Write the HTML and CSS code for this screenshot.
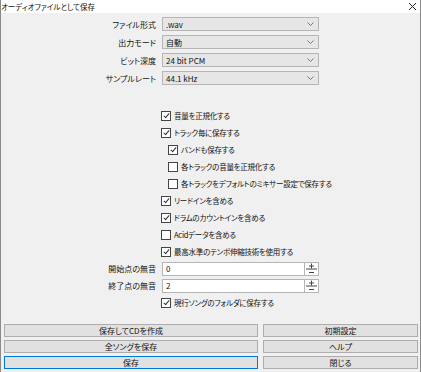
FILE: index.html
```html
<!DOCTYPE html>
<html lang="ja">
<head>
    <meta charset="UTF-8">
    <title>オーディオファイルとして保存</title>
    <link rel="stylesheet" href="styles.css">
</head>
<body>
    <div class="window">
        <div class="titlebar">
            <span class="title">オーディオファイルとして保存</span>
            <svg class="close" width="9" height="9" viewBox="0 0 9 9"><path d="M1 1L8 8M8 1L1 8" stroke="#222" stroke-width="1"/></svg>
        </div>

        <div class="fields">
            <label>ファイル形式</label>
            <div class="combo"><span>.wav</span><svg width="7" height="4" viewBox="0 0 7 4"><path d="M0.5 0.5L3.5 3.5L6.5 0.5" fill="none" stroke="#777"/></svg></div>
            <label>出力モード</label>
            <div class="combo"><span>自動</span><svg width="7" height="4" viewBox="0 0 7 4"><path d="M0.5 0.5L3.5 3.5L6.5 0.5" fill="none" stroke="#777"/></svg></div>
            <label>ビット深度</label>
            <div class="combo"><span>24 bit PCM</span><svg width="7" height="4" viewBox="0 0 7 4"><path d="M0.5 0.5L3.5 3.5L6.5 0.5" fill="none" stroke="#777"/></svg></div>
            <label>サンプルレート</label>
            <div class="combo"><span>44.1 kHz</span><svg width="7" height="4" viewBox="0 0 7 4"><path d="M0.5 0.5L3.5 3.5L6.5 0.5" fill="none" stroke="#777"/></svg></div>
        </div>

        <div class="options">
            <span></span><div class="check"><i class="box on"></i>音量を正規化する</div>
            <span></span><div class="check"><i class="box on"></i>トラック毎に保存する</div>
            <span></span><div class="check sub"><i class="box on"></i>バンドも保存する</div>
            <span></span><div class="check sub"><i class="box"></i>各トラックの音量を正規化する</div>
            <span></span><div class="check sub"><i class="box"></i>各トラックをデフォルトのミキサー設定で保存する</div>
            <span></span><div class="check"><i class="box on"></i>リードインを含める</div>
            <span></span><div class="check"><i class="box on"></i>ドラムのカウントインを含める</div>
            <span></span><div class="check"><i class="box"></i>Acidデータを含める</div>
            <span></span><div class="check"><i class="box on"></i>最高水準のテンポ伸縮技術を使用する</div>
            <label>開始点の無音</label>
            <div class="spin"><span class="value">0</span><svg width="13" height="12" viewBox="0 0 13 12"><path d="M4 3H9M6.5 0.5V5.5M1 6H12M4 9.5H9" stroke="#444" stroke-width="1" fill="none"/></svg></div>
            <label>終了点の無音</label>
            <div class="spin"><span class="value">2</span><svg width="13" height="12" viewBox="0 0 13 12"><path d="M4 3H9M6.5 0.5V5.5M1 6H12M4 9.5H9" stroke="#444" stroke-width="1" fill="none"/></svg></div>
            <span></span><div class="check"><i class="box on"></i>現行ソングのフォルダに保存する</div>
        </div>

        <div class="buttons">
            <button>保存してCDを作成</button>
            <button>初期設定</button>
            <button>全ソングを保存</button>
            <button>ヘルプ</button>
            <button class="default">保存</button>
            <button>閉じる</button>
        </div>
    </div>
</body>
</html>
```

FILE: styles.css
```css
body {
    margin: 0;
    font-family: "Noto Sans CJK JP", "Liberation Sans", sans-serif;
    font-size: 8px;
    font-feature-settings: "palt";
    color: #111;
    background: #fff;
}

.window {
    width: 419px;
    height: 372px;
    background: #f0f0f0;
    border-left: 1px solid #8a8a8a;
    border-right: 1px solid #8a8a8a;
    overflow: hidden;
}

.titlebar {
    height: 13px;
    background: #fff;
    display: flex;
    align-items: center;
    justify-content: space-between;
    padding: 0 3px 0 0;
}

.title {
    font-size: 7.5px;
    line-height: 13px;
}

.fields, .options {
    display: grid;
    grid-template-columns: 155px 157px;
    column-gap: 6px;
    align-items: center;
}

.fields {
    padding-top: 4px;
    row-gap: 4px;
}

.options {
    margin-top: 22px;
    grid-auto-rows: 17px;
}

label {
    text-align: right;
}

.combo {
    height: 12px;
    border: 1px solid #b5b5b5;
    background: #e6e6e6;
    display: flex;
    align-items: center;
    justify-content: space-between;
    padding: 0 4px 0 3px;
}

.check {
    display: flex;
    align-items: center;
    margin-left: -1px;
    white-space: nowrap;
    font-size: 7.5px;
    letter-spacing: -0.25px;
}

.check.sub {
    margin-left: 6px;
}

.box {
    position: relative;
    flex: none;
    width: 8px;
    height: 8px;
    border: 1px solid #444;
    background: #fff;
    margin-right: 3px;
}

.box.on::after {
    content: "";
    position: absolute;
    left: 2.5px;
    top: 0;
    width: 2px;
    height: 5px;
    border-right: 1px solid #333;
    border-bottom: 1px solid #333;
    transform: rotate(40deg);
}

.spin {
    height: 12px;
    border: 1px solid #b5b5b5;
    background: #fff;
    display: flex;
    align-items: center;
    justify-content: space-between;
}

.spin .value {
    padding-left: 3px;
}

.spin svg {
    border-left: 1px solid #b5b5b5;
}

.buttons {
    display: grid;
    grid-template-columns: 254px 155px;
    column-gap: 5px;
    row-gap: 3px;
    padding: 0 3px;
    margin-top: 13px;
}

button {
    height: 13px;
    padding: 0;
    font: inherit;
    font-feature-settings: "palt";
    background: #e1e1e1;
    border: 1px solid #adadad;
    color: #111;
    line-height: 11px;
}

button.default {
    border: 1px solid #0078d7;
}
```
